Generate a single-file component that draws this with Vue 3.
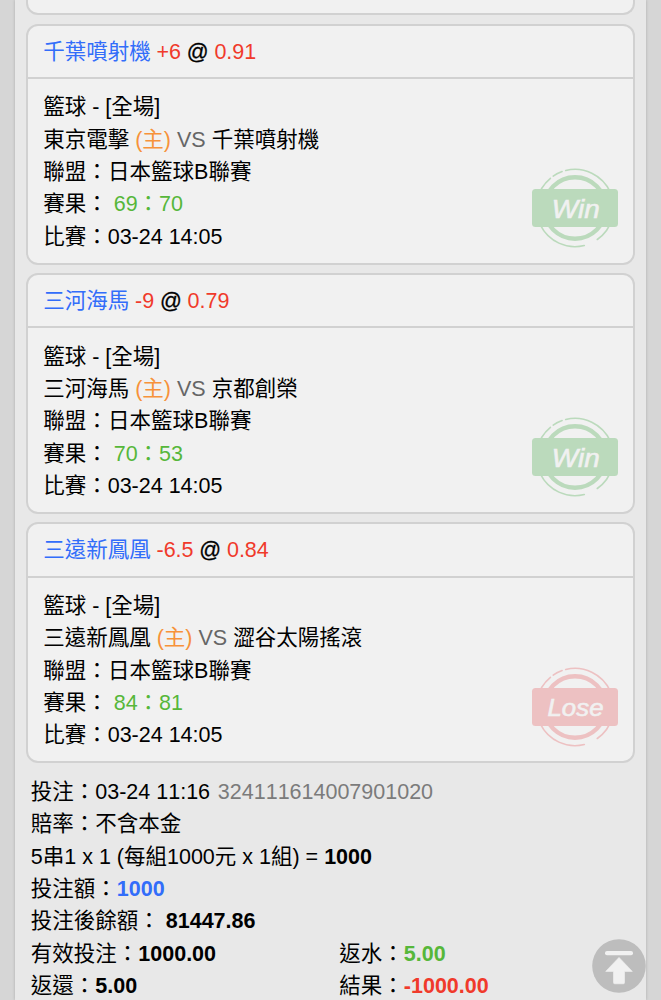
<template>
  <div class="page">
    <div class="panel">
      <div class="bet-card bet-card-prev"></div>

      <!-- Матчи -->
      <div class="bet-card" v-for="bet in bets" :key="bet.pick">
        <div class="card-header">
          <span class="blue">{{ bet.pick }}</span>&nbsp;<span class="red">{{ bet.handicap }}</span> <span class="at">@</span> <span class="red">{{ bet.odds }}</span>
        </div>
        <div class="card-body">
          <div>籃球 - [全場]</div>
          <div>
            {{ bet.home }} <span class="orange">(主)</span> <span class="grey">VS</span> {{ bet.away }}
          </div>
          <div>聯盟：<span class="league">日本籃球B聯賽</span></div>
          <div>賽果： <span class="green">{{ bet.score }}</span></div>
          <div>比賽：03-24 14:05</div>
        </div>

        <svg class="stamp" :class="bet.result" viewBox="-44 -40 88 80">
          <circle r="30.7" fill="none" stroke="currentColor" stroke-width="4.4" />
          <g fill="none" stroke="currentColor" stroke-width="1.6" stroke-linecap="round">
            <path d="M-9.3 -37.5A38.6 38.6 0 0 1 22.3 31.5" />
            <path d="M9.3 37.5A38.6 38.6 0 0 1 -24.6 -29.7" />
            <path d="M-21.8 -31.9A38.6 38.6 0 0 1 -12.9 -36.4" />
          </g>
          <rect x="-43" y="-19" width="86" height="38" rx="3.5" fill="currentColor" />
          <text v-if="bet.result === 'win'" x="0.8" y="10" font-size="26" textLength="48" lengthAdjust="spacingAndGlyphs">Win</text>
          <text v-else x="0.5" y="8.6" font-size="24.5" textLength="56" lengthAdjust="spacingAndGlyphs">Lose</text>
        </svg>
      </div>

      <!-- Итоги ставки -->
      <div class="summary">
        <div>投注：03-24 11:16 <span class="number">324111614007901020</span></div>
        <div>賠率：不含本金</div>
        <div>5串1 x 1 (每組1000元 x 1組) = <b>1000</b></div>
        <div>投注額：<b class="blue">1000</b></div>
        <div>投注後餘額： <b>81447.86</b></div>
        <div class="row">
          <div>有效投注：<b>1000.00</b></div>
          <div>返水：<b class="green">5.00</b></div>
        </div>
        <div class="row">
          <div>返還：<b>5.00</b></div>
          <div>結果：<b class="red">-1000.00</b></div>
        </div>
      </div>
    </div>

    <button class="to-top" @click="scrollTop">
      <svg viewBox="0 0 54 54" width="54" height="54">
        <circle cx="27" cy="27" r="26.8" fill="#bdbdbd" />
        <rect x="13" y="12" width="28" height="4.2" rx="2" fill="#f1f1f1" />
        <path
          d="M27 18.4L40.3 32.4H32.5V43.6Q32.5 44.8 31.3 44.8H22.7Q21.5 44.8 21.5 43.6V32.4H13.7Z"
          fill="#f1f1f1"
          stroke="#f1f1f1"
          stroke-width="0.6"
          stroke-linejoin="round"
        />
      </svg>
    </button>
  </div>
</template>

<script setup>
import { ref } from 'vue';

const bets = ref([
  {
    pick: '千葉噴射機',
    handicap: '+6',
    odds: '0.91',
    home: '東京電擊',
    away: '千葉噴射機',
    score: '69：70',
    result: 'win'
  },
  {
    pick: '三河海馬',
    handicap: '-9',
    odds: '0.79',
    home: '三河海馬',
    away: '京都創榮',
    score: '70：53',
    result: 'win'
  },
  {
    pick: '三遠新鳳凰',
    handicap: '-6.5',
    odds: '0.84',
    home: '三遠新鳳凰',
    away: '澀谷太陽搖滾',
    score: '84：81',
    result: 'lose'
  }
]);

function scrollTop() {
  window.scrollTo({ top: 0, behavior: 'smooth' });
}
</script>

<style>
body {
  margin: 0;
  overflow: hidden;
}
</style>

<style scoped>
.page {
  height: 1000px;
  overflow: hidden;
  padding: 0 15px;
  box-sizing: border-box;
  background: #d6d6d6;
  color: #000;
  font-family: "Liberation Sans", "Noto Sans CJK TC", sans-serif;
  font-size: 21.5px;
  line-height: 32.33px;
  font-kerning: none;
}

.panel {
  height: 1000px;
  padding: 0 11px;
  box-sizing: border-box;
  background: #e8e8e8;
  box-shadow: 0 0 3px rgba(0, 0, 0, 0.2);
}

.bet-card {
  position: relative;
  height: 240.9px;
  margin-bottom: 8.4px;
  box-sizing: border-box;
  border: 2px solid #d1d1d1;
  border-radius: 12px;
  background: #f1f1f1;
}

.bet-card-prev {
  height: 15.3px;
  border-top: none;
  border-radius: 0 0 12px 12px;
}

.card-header {
  height: 53.3px;
  box-sizing: border-box;
  padding: 10px 15.2px 0;
  border-bottom: 2px solid #d1d1d1;
  word-spacing: -0.2px;
}

.card-body {
  padding: 12.4px 15.2px 0;
}

.card-header,
.card-body,
.summary {
  white-space: nowrap;
}

.at {
  -webkit-text-stroke: 0.3px #000;
}

.league {
  margin-left: 0.4px;
}

.stamp {
  position: absolute;
  right: 14px;
  bottom: 14.4px;
  width: 88px;
  height: 80px;
}

.stamp text {
  fill: #f1f1f1;
  stroke: #f1f1f1;
  stroke-width: 0.6px;
  font-style: italic;
  text-anchor: middle;
}

.win {
  color: #bbdabc;
}

.lose {
  color: #edc1c2;
}

.summary {
  padding: 4.4px 4.8px 0;
}

.row {
  display: grid;
  grid-template-columns: 308.5px 1fr;
}

.blue {
  color: #326dfa;
}

.red {
  color: #f03a2b;
}

.orange {
  color: #f7923a;
}

.green {
  color: #56b73a;
}

.grey {
  color: #666;
}

.number {
  margin-left: 1.8px;
  color: #7b7b7b;
}

.to-top {
  position: fixed;
  left: 591.7px;
  top: 938.7px;
  padding: 0;
  border: none;
  background: none;
  cursor: pointer;
}

.to-top svg {
  display: block;
}
</style>
